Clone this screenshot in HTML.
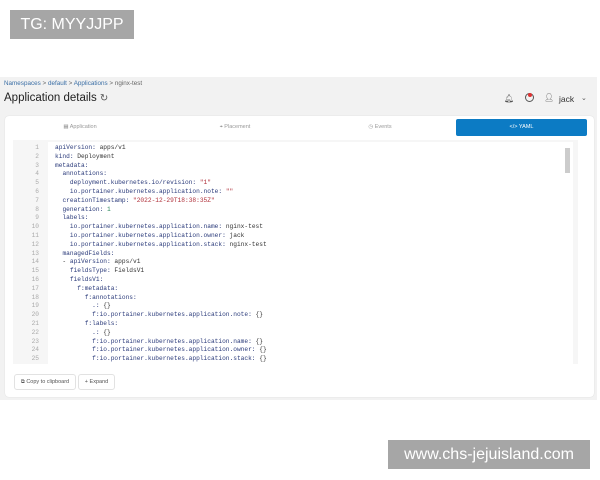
<!DOCTYPE html><html><head><style>
body{margin:0;width:600px;height:480px;background:#fff;position:relative;overflow:hidden;font-family:"Liberation Sans",sans-serif}
.a{position:absolute}
.wm{background:#a6a6a6;color:#fff;font-size:16px;line-height:29px;text-align:center}
.code{font-family:"Liberation Mono",monospace;font-size:6.2px;color:#333;line-height:8.8px;white-space:pre}
.ln{font-family:"Liberation Mono",monospace;font-size:6.2px;color:#aaa;line-height:8.8px;text-align:right;white-space:pre}
.k{color:#2a3a7a}.s{color:#b0303a}.n{color:#2a8a5a}
.tab{top:119px;height:17px;font-size:5.5px;color:#999;text-align:center;line-height:17px}
.btn{top:374px;height:14px;border:1px solid #e2e2e2;border-radius:3px;background:#fff;font-size:5.5px;color:#555;line-height:14px;text-align:center}
</style></head><body>
<div class="a wm" style="left:10px;top:10px;width:124px">TG: MYYJJPP</div>
<div class="a" style="left:0;top:77px;width:597px;height:323px;background:#f2f2f2"></div>
<div class="a" style="left:4px;top:80px;font-size:6.3px;color:#666"><span style="color:#3a6ea5">Namespaces</span> &gt; <span style="color:#3a6ea5">default</span> &gt; <span style="color:#3a6ea5">Applications</span> &gt; nginx-test</div>
<div class="a" style="left:4px;top:92px;font-size:11.5px;color:#222">Application details <span style="font-size:10px;color:#555">&#x21bb;</span></div>
<div class="a" style="left:504px;top:94px;font-size:8px;color:#555">&#x1F514;&#xFE0E;</div>
<div class="a" style="left:525px;top:93px;width:7px;height:7px;border:1px solid #555;border-radius:50%"></div>
<div class="a" style="left:528px;top:93px;width:4px;height:4px;background:#d33;border-radius:50%"></div>
<div class="a" style="left:544px;top:93px;font-size:8px;color:#666">&#x1F464;&#xFE0E;</div>
<div class="a" style="left:559px;top:94px;font-size:8.5px;color:#333">jack</div>
<div class="a" style="left:581px;top:94px;font-size:7px;color:#555">&#x2304;</div>
<div class="a" style="left:5px;top:116px;width:589px;height:281px;background:#fff;border-radius:4px;box-shadow:0 0 1px #ccc"></div>
<div class="a tab" style="left:10px;width:140px">&#9638; Application</div>
<div class="a tab" style="left:160px;width:150px">&#8982; Placement</div>
<div class="a tab" style="left:310px;width:140px">&#9719; Events</div>
<div class="a tab" style="left:456px;width:131px;background:#0c7bc4;color:#fff;border-radius:2px">&lt;/&gt; YAML</div>
<div class="a" style="left:13px;top:140px;width:565px;height:224px;background:#f6f6f6"></div>
<div class="a" style="left:48px;top:142px;width:525px;height:222px;background:#fff"></div>
<div class="a" style="left:565px;top:148px;width:5px;height:25px;background:#ccc"></div>
<div class="a ln" style="left:20px;top:144px;width:19px">1
2
3
4
5
6
7
8
9
10
11
12
13
14
15
16
17
18
19
20
21
22
23
24
25</div>
<div class="a code" style="left:55px;top:144px;height:220px;overflow:hidden"><span class="k">apiVersion:</span> apps/v1
<span class="k">kind:</span> Deployment
<span class="k">metadata:</span>
  <span class="k">annotations:</span>
    <span class="k">deployment.kubernetes.io/revision:</span> <span class="s">"1"</span>
    <span class="k">io.portainer.kubernetes.application.note:</span> <span class="s">""</span>
  <span class="k">creationTimestamp:</span> <span class="s">"2022-12-29T18:38:35Z"</span>
  <span class="k">generation:</span> <span class="n">1</span>
  <span class="k">labels:</span>
    <span class="k">io.portainer.kubernetes.application.name:</span> nginx-test
    <span class="k">io.portainer.kubernetes.application.owner:</span> jack
    <span class="k">io.portainer.kubernetes.application.stack:</span> nginx-test
  <span class="k">managedFields:</span>
  - <span class="k">apiVersion:</span> apps/v1
    <span class="k">fieldsType:</span> FieldsV1
    <span class="k">fieldsV1:</span>
      <span class="k">f:metadata:</span>
        <span class="k">f:annotations:</span>
          <span class="k">.:</span> {}
          <span class="k">f:io.portainer.kubernetes.application.note:</span> {}
        <span class="k">f:labels:</span>
          <span class="k">.:</span> {}
          <span class="k">f:io.portainer.kubernetes.application.name:</span> {}
          <span class="k">f:io.portainer.kubernetes.application.owner:</span> {}
          <span class="k">f:io.portainer.kubernetes.application.stack:</span> {}</div>
<div class="a btn" style="left:14px;width:60px">&#x29C9; Copy to clipboard</div>
<div class="a btn" style="left:78px;width:35px">+ Expand</div>
<div class="a wm" style="left:388px;top:440px;width:202px">www.chs-jejuisland.com</div>
</body></html>
